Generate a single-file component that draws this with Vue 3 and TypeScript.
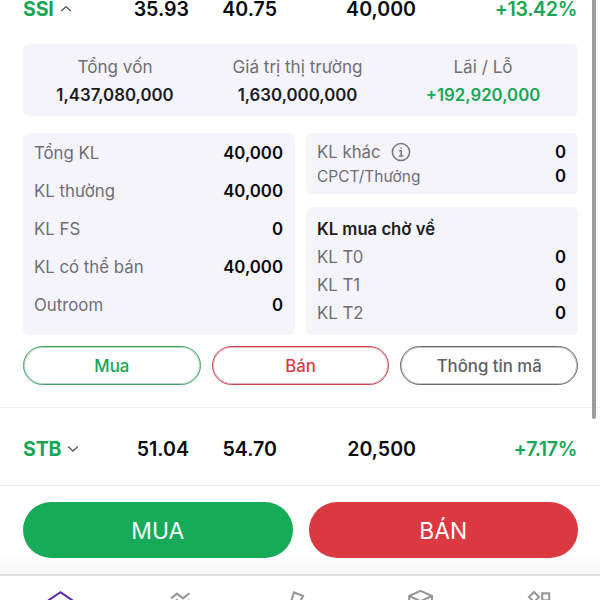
<script setup lang="ts">
import { ref } from 'vue';

interface Holding {
  symbol: string;
  cost: string;
  price: string;
  volume: string;
  change: string;
}

interface Line {
  label: string;
  value: string;
}

const ssi: Holding = { symbol: 'SSI', cost: '35.93', price: '40.75', volume: '40,000', change: '+13.42%' };
const stb: Holding = { symbol: 'STB', cost: '51.04', price: '54.70', volume: '20,500', change: '+7.17%' };

const summary = [
  { label: 'Tổng vốn', value: '1,437,080,000', up: false },
  { label: 'Giá trị thị trường', value: '1,630,000,000', up: false },
  { label: 'Lãi / Lỗ', value: '+192,920,000', up: true },
];

const volumes: Line[] = [
  { label: 'Tổng KL', value: '40,000' },
  { label: 'KL thường', value: '40,000' },
  { label: 'KL FS', value: '0' },
  { label: 'KL có thể bán', value: '40,000' },
  { label: 'Outroom', value: '0' },
];

const pending: Line[] = [
  { label: 'KL T0', value: '0' },
  { label: 'KL T1', value: '0' },
  { label: 'KL T2', value: '0' },
];

const activeTab = ref('home');
const tabs = [
  { id: 'home', paths: ['M0.8 12 L12.5 4.2 L24 12 V22 H0.8 Z'] },
  { id: 'market', paths: ['M3 10.4 L9 5.6 L15 10.4 L21.6 5.2', 'M3 17 L9 12 L15 17 L21.6 12'] },
  { id: 'order', paths: ['M3.4 12.5 L6 4.4 L15 7.8 L12.8 12.5'] },
  { id: 'assets', paths: ['M1.2 8 L12.5 2.8 L24 8 V19 L12.5 24 L1.2 19 Z', 'M1.2 8 L12.5 13.2 L24 8'] },
  { id: 'more', paths: ['M6 4 L11 9 L6 14 L1 9 Z', 'M14.2 5.4 H21.2 V12.4 H14.2 Z'] },
];
</script>

<template>
  <div class="screen">
    <main class="list">
      <div class="holding holding--open">
        <span class="holding__symbol">
          {{ ssi.symbol }}
          <svg class="chevron" viewBox="0 0 12 8"><path d="M1.2 6 L6 1.6 L10.8 6" /></svg>
        </span>
        <span>{{ ssi.cost }}</span>
        <span>{{ ssi.price }}</span>
        <span>{{ ssi.volume }}</span>
        <span class="holding__change">{{ ssi.change }}</span>
      </div>

      <section class="summary">
        <div v-for="s in summary" :key="s.label" class="summary__cell">
          <span class="summary__label">{{ s.label }}</span>
          <span class="summary__value" :class="{ 'is-up': s.up }">{{ s.value }}</span>
        </div>
      </section>

      <div class="panels">
        <section class="card card--volumes">
          <div v-for="v in volumes" :key="v.label" class="line">
            <span>{{ v.label }}</span>
            <b>{{ v.value }}</b>
          </div>
        </section>
        <div class="panels__side">
          <section class="card card--other">
            <div class="line">
              <span class="line__info">
                KL khác
                <svg class="info" viewBox="0 0 20 20">
                  <circle cx="10" cy="10" r="8.6" />
                  <path d="M8.2 8.8 H10.2 V13.8 M7.8 13.9 H12.4 M9.4 6.1 H10.8" />
                </svg>
              </span>
              <b>0</b>
            </div>
            <div class="line line--sub">
              <span>CPCT/Thưởng</span>
              <b>0</b>
            </div>
          </section>
          <section class="card card--pending">
            <h3 class="card__title">KL mua chờ về</h3>
            <div v-for="p in pending" :key="p.label" class="line">
              <span>{{ p.label }}</span>
              <b>{{ p.value }}</b>
            </div>
          </section>
        </div>
      </div>

      <div class="actions">
        <button class="pill pill--buy">Mua</button>
        <button class="pill pill--sell">Bán</button>
        <button class="pill">Thông tin mã</button>
      </div>

      <div class="holding holding--closed">
        <span class="holding__symbol">
          {{ stb.symbol }}
          <svg class="chevron" viewBox="0 0 12 8"><path d="M1.2 1.6 L6 6 L10.8 1.6" /></svg>
        </span>
        <span>{{ stb.cost }}</span>
        <span>{{ stb.price }}</span>
        <span>{{ stb.volume }}</span>
        <span class="holding__change">{{ stb.change }}</span>
      </div>
      <div class="scrollbar"></div>
    </main>

    <div class="trade">
      <button class="trade__btn trade__btn--buy">MUA</button>
      <button class="trade__btn trade__btn--sell">BÁN</button>
    </div>

    <nav class="tabs">
      <a v-for="t in tabs" :key="t.id" class="tabs__item" :class="{ 'is-active': t.id === activeTab }"
        @click="activeTab = t.id">
        <svg viewBox="0 0 24 24"><path v-for="d in t.paths" :key="d" :d="d" /></svg>
      </a>
    </nav>
  </div>
</template>

<style>
body {
  margin: 0;
  background: #fff;
}
</style>

<style scoped>
.screen {
  --green: #17a655;
  --red: #dc3841;
  --panel: #f5f4fb;
  --muted: #6f6e74;
  width: 600px;
  height: 600px;
  box-sizing: border-box;
  display: flex;
  flex-direction: column;
  overflow: hidden;
  background: #fff;
  color: #0b0b0f;
  font-family: Inter, "Liberation Sans", sans-serif;
}
.list {
  position: relative;
  height: 485px;
  flex: none;
}
.scrollbar {
  position: absolute;
  top: 0;
  right: 4px;
  width: 4px;
  height: 419px;
  border-radius: 0 0 2px 2px;
  background: #9d9d9d;
}

.holding {
  display: grid;
  grid-template-columns: 60px 106px 88px 139px 161px;
  box-sizing: border-box;
  padding: 0 23px;
  align-items: center;
  text-align: right;
  font-size: 19.6px;
  font-weight: 600;
  line-height: 16px;
}
.holding--open {
  height: 17px;
  padding-top: 1px;
  margin-bottom: 27px;
}
.holding--closed {
  height: 77px;
  padding-top: 6px;
  border-top: 1px solid #f0f0f2;
}
.holding__symbol {
  display: flex;
  align-items: center;
  gap: 6px;
  color: var(--green);
  font-weight: 700;
  letter-spacing: -0.2px;
}
.holding__change {
  color: var(--green);
  letter-spacing: -0.35px;
}
.chevron {
  width: 12px;
  height: 8px;
  fill: none;
  stroke: #55555a;
  stroke-width: 1.3;
}

.summary {
  display: grid;
  grid-template-columns: 184px 181px 190px;
  height: 72px;
  margin: 0 22px 0 23px;
  padding-top: 11px;
  box-sizing: border-box;
  border-radius: 6px;
  background: var(--panel);
}
.summary__cell {
  display: flex;
  flex-direction: column;
  align-items: center;
  gap: 4px;
}
.summary__label {
  color: var(--muted);
  font-size: 17.1px;
  line-height: 24px;
}
.summary__value {
  color: #1d1c24;
  font-size: 16.8px;
  font-weight: 600;
  line-height: 24px;
}
.summary__value.is-up {
  color: var(--green);
}

.panels {
  display: grid;
  grid-template-columns: 272px 272px;
  gap: 11px;
  height: 202px;
  margin: 17px 22px 0 23px;
}
.panels__side {
  display: flex;
  flex-direction: column;
  gap: 13px;
}
.card {
  flex: 1;
  box-sizing: border-box;
  border-radius: 6px;
  background: var(--panel);
  padding: 0 12px 0 11px;
}
.card--other {
  flex: 0 0 61px;
  padding-top: 7px;
}
.card--pending {
  padding-top: 8px;
}
.card--volumes {
  padding-top: 1px;
}
.card--volumes .line {
  height: 38px;
}
.line {
  display: flex;
  align-items: center;
  justify-content: space-between;
  height: 28px;
  color: var(--muted);
  font-size: 16.8px;
}
.line b {
  color: #0b0b0f;
  font-weight: 600;
}
.card--other .line {
  height: 24px;
}
.line--sub span {
  font-size: 15.5px;
}
.line__info {
  display: flex;
  align-items: center;
  gap: 11px;
}
.info {
  width: 20px;
  height: 20px;
  margin-top: -1px;
  margin-left: -1px;
  fill: none;
  stroke: #77767c;
  stroke-width: 1.5;
}
.card__title {
  margin: 0;
  color: #1d1c24;
  font-size: 16.7px;
  font-weight: 600;
  line-height: 28px;
}

.actions {
  display: flex;
  gap: 11px;
  height: 39px;
  margin: 11px 22px 22px 23px;
}
.pill {
  flex: 1;
  padding: 0;
  border: 1px solid #6a696e;
  border-radius: 20px;
  background: none;
  box-shadow: inset 0 0 0 1px rgba(106, 105, 110, 0.4);
  color: #606065;
  font: 500 16.8px Inter, sans-serif;
}
.pill--buy {
  border-color: #45a065;
  box-shadow: inset 0 0 0 1px rgba(69, 160, 101, 0.4);
  color: var(--green);
}
.pill--sell {
  border-color: #c8434f;
  box-shadow: inset 0 0 0 1px rgba(200, 67, 79, 0.4);
  color: #d63a48;
}

.trade {
  display: flex;
  gap: 16px;
  height: 89px;
  flex: none;
  padding: 16px 22px 16px 23px;
  border-top: 1px solid #ededee;
  box-sizing: border-box;
  background: linear-gradient(#fff 78%, #f7f7f7);
}
.trade__btn {
  flex: 1;
  height: 56px;
  padding: 1px 0 0;
  border: 0;
  border-radius: 28px;
  color: #fff;
  font: 400 22.8px Inter, sans-serif;
}
.trade__btn--buy {
  background: #15ab57;
}
.trade__btn--sell {
  background: var(--red);
}

.tabs {
  display: flex;
  flex: none;
  height: 40px;
  border-top: 2px solid #dfdfdf;
  padding-top: 12px;
  box-sizing: border-box;
}
.tabs__item {
  flex: 1;
  display: flex;
  justify-content: center;
  align-items: flex-start;
}
.tabs__item svg {
  width: 24px;
  height: 24px;
  overflow: visible;
  fill: none;
  stroke: #98989b;
  stroke-width: 2.1;
}
.tabs__item.is-active svg {
  stroke: #5c2aae;
}
</style>
